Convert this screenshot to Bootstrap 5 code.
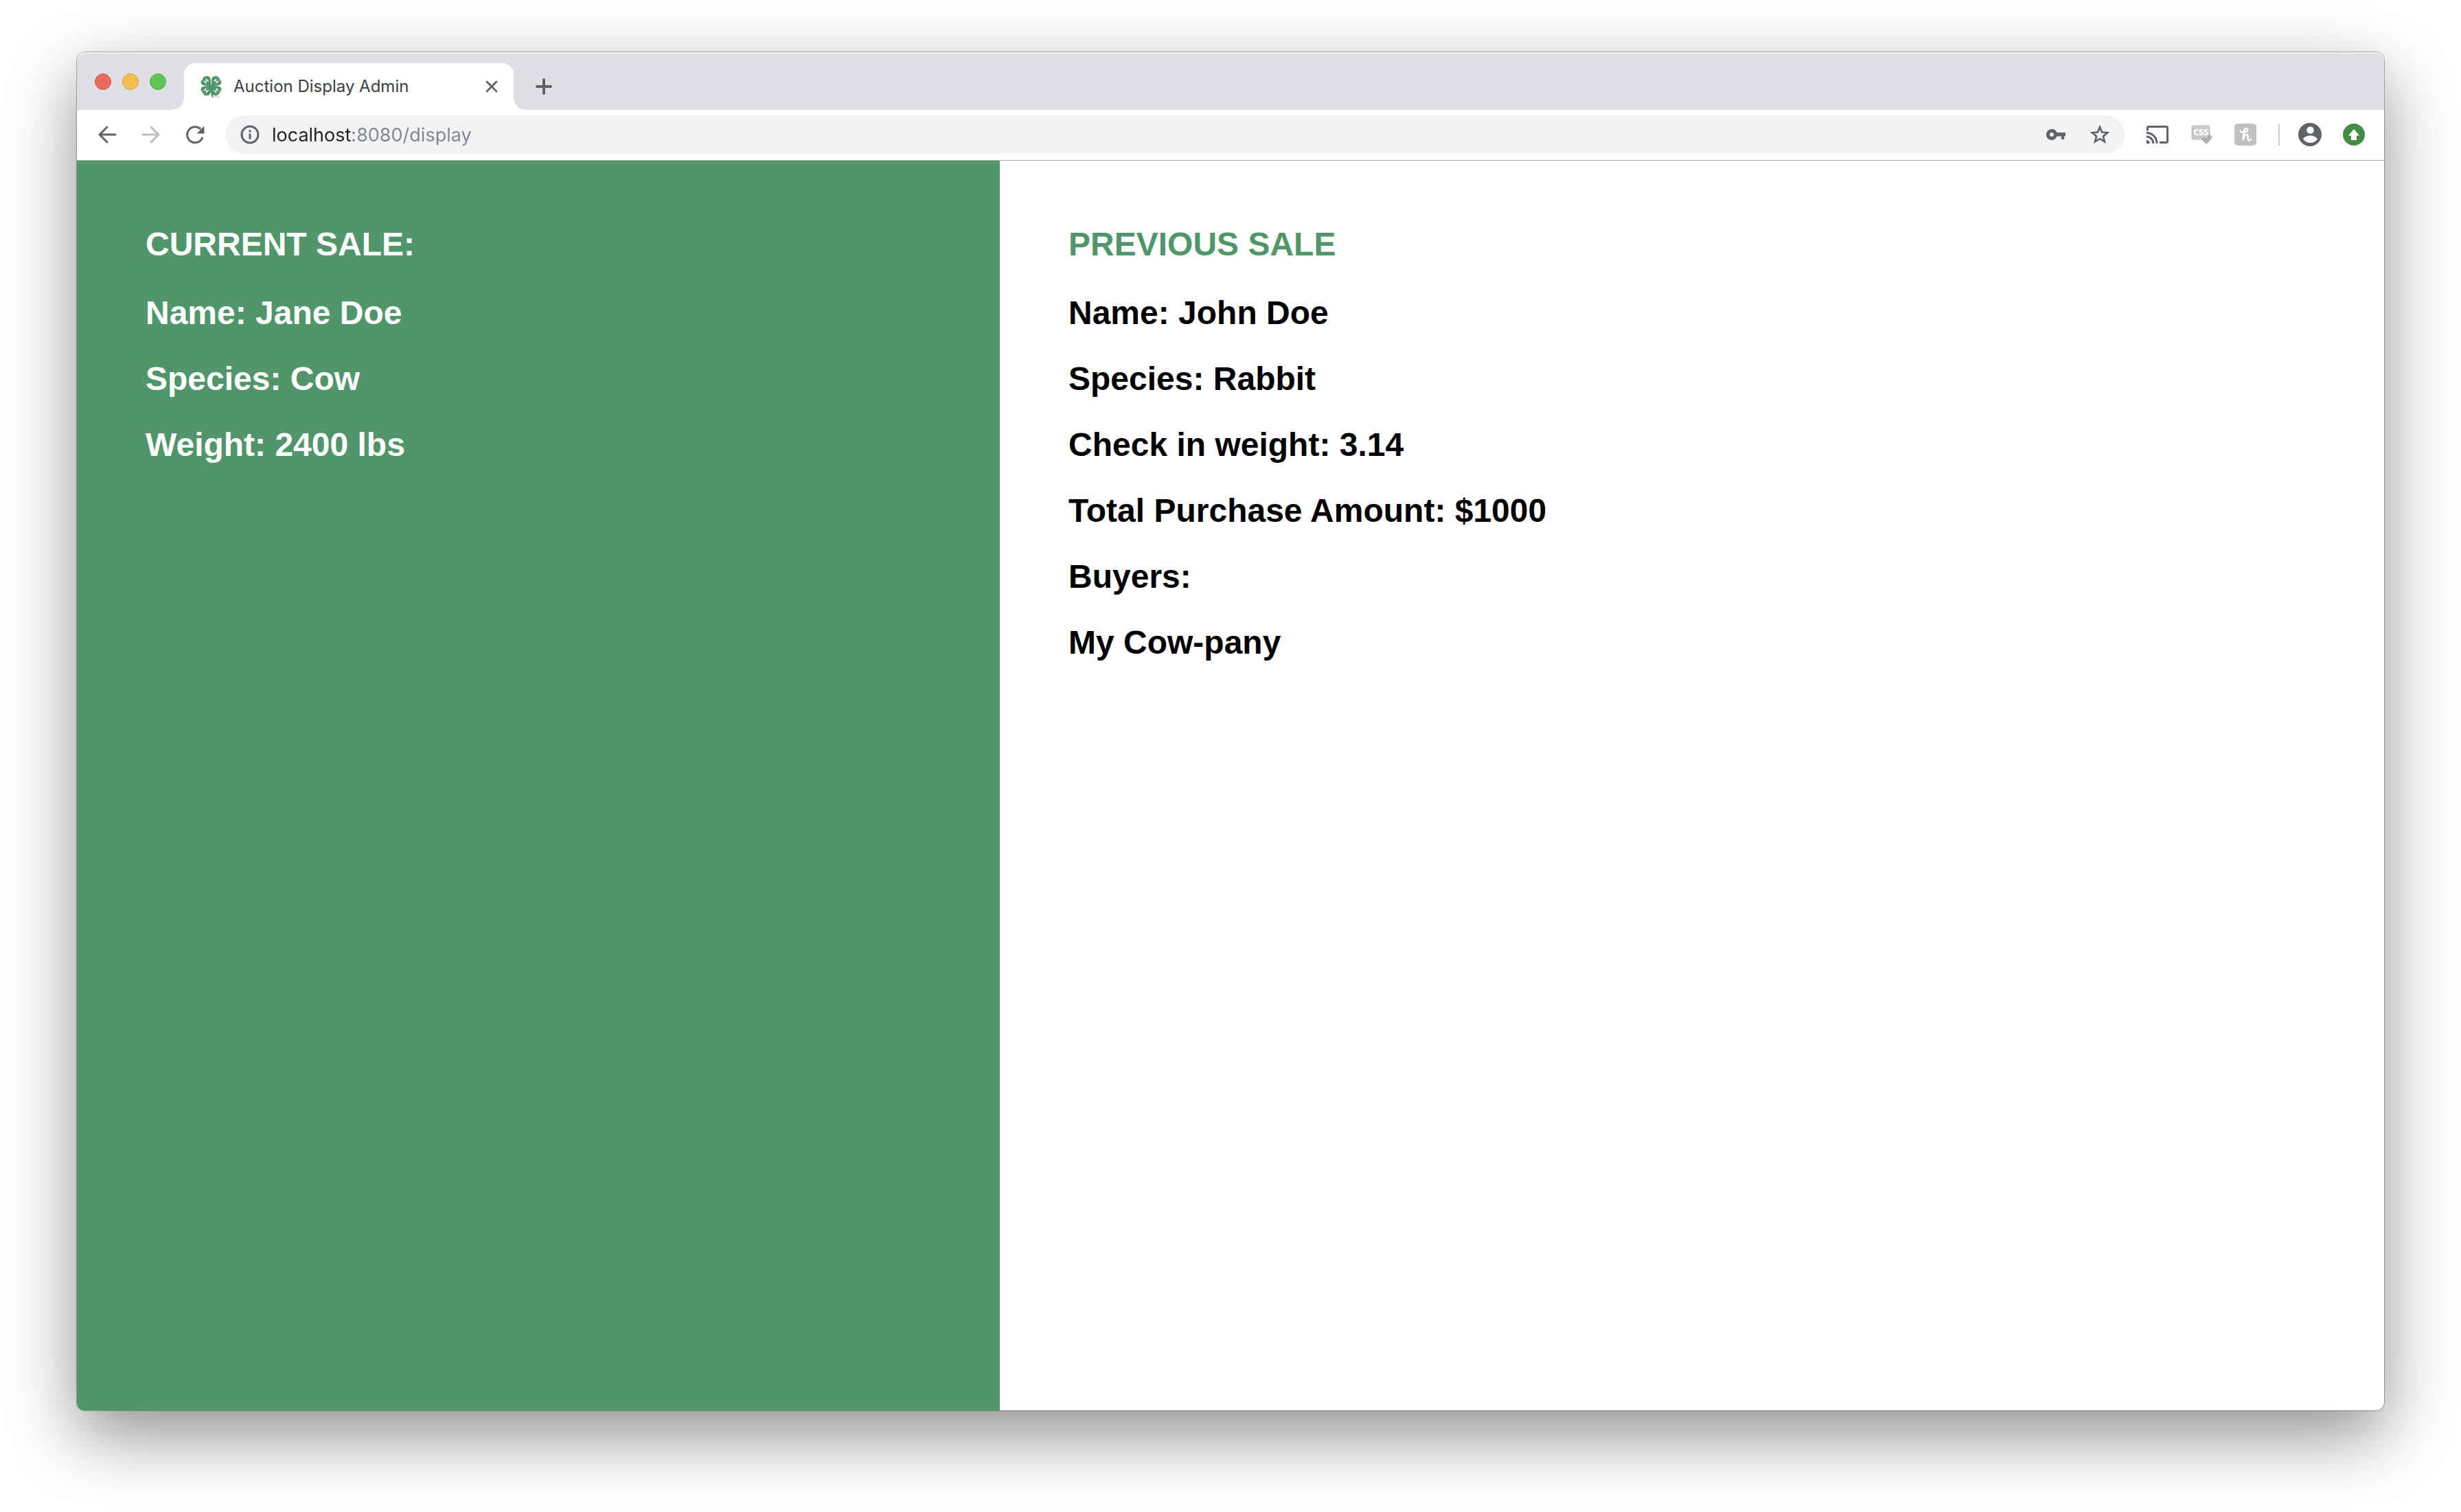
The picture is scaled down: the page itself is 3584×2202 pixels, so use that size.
<!DOCTYPE html>
<html lang="en">
<head>
<meta charset="utf-8">
<meta name="viewport" content="width=device-width, initial-scale=1">
<title>Auction Display Admin</title>
<link href="https://cdn.jsdelivr.net/npm/bootstrap@5.3.0/dist/css/bootstrap.min.css" rel="stylesheet">
<style>
  :root { --clover: #50966a; --ink: #5f6368; }
  body { background: #fff; padding: 76px 112px 148px; font-family: Inter, Roboto, sans-serif; }
  svg { display: block; flex: none; }
  .app-window { border-radius: 12px; background: #fff; box-shadow: 0 0 0 1px rgba(0,0,0,.28), 0 36px 100px rgba(0,0,0,.44); }
  .tab-strip { height: 84px; padding-left: 26px; background: #dfe0e6; border-radius: 12px 12px 0 0; box-shadow: inset 0 2px 0 rgba(255,255,255,.5); }
  .lights { gap: 16px; margin: 31px 26px 0 0; }
  .light { width: 24px; height: 24px; border-radius: 50%; border: 1px solid; padding: 0; }
  .light-close { background: #ec6a5e; border-color: #d5544a; }
  .light-min { background: #f5bf4f; border-color: #d9a03c; }
  .light-max { background: #61c554; border-color: #4eaa3f; }
  .page-tab { width: 480px; height: 68px; padding: 0 16px 0 24px; background: #fff; border-radius: 16px 16px 0 0; position: relative; color: #3c4043; font-size: 24px; line-height: 32px; }
  .page-tab::before, .page-tab::after { content: ""; position: absolute; bottom: 0; width: 16px; height: 16px; }
  .page-tab::before { left: -16px; background: radial-gradient(circle at 0 0, transparent 15px, #fff 16px); }
  .page-tab::after { right: -16px; background: radial-gradient(circle at 100% 0, transparent 15px, #fff 16px); }
  .tab-link { gap: 16px; color: inherit; text-decoration: none; }
  .tool-btn { width: 64px; height: 56px; padding: 0; border: 0; background: none; display: flex; align-items: center; justify-content: center; flex: none; color: var(--ink); }
  .tab-x { width: 32px; height: 32px; }
  .tab-plus { width: 56px; height: 68px; margin-left: 16px; }
  .toolbar-row { padding: 8px 12px 9px; border-bottom: 1px solid #b1b1b1; }
  .address { height: 56px; border-radius: 28px; background: #f1f3f4; margin: 0 16px 0 12px; padding: 0 4px 0 22px; }
  .address-input { border: 0; outline: 0; padding: 0; margin-left: 18px; height: 56px; min-width: 0; font-size: 27px; color: transparent;
    background: linear-gradient(90deg, #202124 118px, #80868b 118px); -webkit-background-clip: text; background-clip: text; }
  .divider { width: 2px; height: 32px; background: #cfcfcf; margin: 0 12px 0 16px; }
  .board { min-height: calc(100vh - 382px); font-family: "Liberation Sans", Arial, sans-serif; }
  .sale { padding: 94px 100px 60px; color: #000; }
  .sale-now { width: 40%; background: var(--clover); color: #fff; border-bottom-left-radius: 10px; }
  .sale-before { width: 60%; }
  .sale h1, .sale p { font-size: 48px; line-height: 56px; font-weight: 700; margin: 0 0 40px; }
  .sale h1 { margin-bottom: 44px; }
  .sale-before h1 { color: var(--clover); }
</style>
<script src="https://cdn.jsdelivr.net/npm/bootstrap@5.3.0/dist/js/bootstrap.bundle.min.js"></script>
</head>
<body>
<div class="app-window">
  <header>
    <div class="tab-strip d-flex align-items-end">
      <div class="lights d-flex align-self-start">
        <button class="light light-close" type="button" aria-label="Close window"></button>
        <button class="light light-min" type="button" aria-label="Minimize window"></button>
        <button class="light light-max" type="button" aria-label="Zoom window"></button>
      </div>
      <div class="page-tab d-flex align-items-center justify-content-between">
        <a class="tab-link d-flex align-items-center" href="#">
          <svg width="32" height="32" viewBox="0 0 32 32" aria-hidden="true">
            <defs><g id="leaf">
              <path fill="#50966a" d="M16 16C12 14.300 6 15.500 2.500 13.500C-.3 11.500 0 7.500 3 6C2.800 3 6.500 .2 10 .8C14 1.500 15.300 5 14.900 8.500C14.800 11 15.200 13 16 16Z"/>
              <path d="M4.600 7.600l4 4M7.800 4.600l4 4M6.800 9.500l3-3" stroke="#fff" stroke-width="1.200" fill="none"/>
            </g></defs>
            <use href="#leaf"/>
            <use href="#leaf" transform="matrix(-1 0 0 1 31 0)"/>
            <use href="#leaf" transform="matrix(1 0 0 -1 0 30)"/>
            <use href="#leaf" transform="matrix(-1 0 0 -1 31 30)"/>
            <path d="M15.500 14C15.500 21 16 27 18 31.500" stroke="#50966a" stroke-width="2.200" fill="none"/>
            <path d="M20 31h8" stroke="#9fc9ae" stroke-width="1"/>
          </svg>
          <span>Auction Display Admin</span>
        </a>
        <button class="tool-btn tab-x" type="button" aria-label="Close tab">
          <svg width="18" height="18" viewBox="0 0 18 18"><path d="M2 2l14 14M16 2L2 16" stroke="currentColor" stroke-width="2.800" stroke-linecap="round"/></svg>
        </button>
      </div>
      <button class="tool-btn tab-plus" type="button" aria-label="New tab">
        <svg width="24" height="24" viewBox="0 0 24 24"><path d="M12 2v20M2 12h20" stroke="currentColor" stroke-width="4" stroke-linecap="round"/></svg>
      </button>
    </div>
    <div class="toolbar-row d-flex align-items-center">
      <button class="tool-btn" type="button" aria-label="Back">
        <svg width="28" height="28" viewBox="0 0 28 28"><path d="M26 14H3M14 3L3 14L14 25" stroke="currentColor" stroke-width="3" fill="none" stroke-linecap="round"/></svg>
      </button>
      <button class="tool-btn" type="button" aria-label="Forward">
        <svg width="28" height="28" viewBox="0 0 28 28"><path d="M2 14H25M14 3L25 14L14 25" stroke="#babcbe" stroke-width="3" fill="none" stroke-linecap="round"/></svg>
      </button>
      <button class="tool-btn" type="button" aria-label="Reload">
        <svg width="28" height="28" viewBox="0 0 28 28"><path d="M25 18A11.500 11.500 0 1 1 22.200 6" stroke="currentColor" stroke-width="3" fill="none"/><path d="M27.500 1.500V12.500H16.500Z" fill="currentColor"/></svg>
      </button>
      <div class="address d-flex align-items-center flex-grow-1">
        <svg width="28" height="28" viewBox="0 0 28 28" aria-hidden="true"><circle cx="14" cy="14" r="12" fill="none" stroke="#5f6368" stroke-width="3"/><path d="M14 7.500v3M14 12.500v8" stroke="#5f6368" stroke-width="3"/></svg>
        <input class="address-input flex-grow-1" type="text" aria-label="Address" value="localhost:8080/display">
        <button class="tool-btn" type="button" aria-label="Saved passwords">
          <svg width="28" height="16" viewBox="0 0 28 16"><path fill="currentColor" fill-rule="evenodd" d="M8 0a8 8 0 0 1 7.500 5H28V10.500H26V15H22V10.500H15.500A8 8 0 1 1 8 0ZM8 5a3 3 0 1 0 0 6a3 3 0 0 0 0-6Z"/></svg>
        </button>
        <button class="tool-btn" type="button" aria-label="Bookmark">
          <svg width="30" height="30" viewBox="0 0 30 30"><path d="M15 4L18 11.600L26.200 12.200L19.900 17.400L22 25.400L15 21L8 25.400L10.100 17.400L3.800 12.200L12 11.600Z" stroke="currentColor" stroke-width="2.600" fill="none"/></svg>
        </button>
      </div>
      <button class="tool-btn" type="button" aria-label="Cast">
        <svg width="32" height="28" viewBox="0 0 32 28"><g fill="none" stroke="currentColor" stroke-width="3"><path d="M1.500 8.500V4Q1.500 2.500 3 2.500H29Q30.500 2.500 30.500 4V24Q30.500 25.500 29 25.500H19"/><path d="M0 11.500A15 15 0 0 1 15 26.900M0 17A9.800 9.800 0 0 1 9.800 26.900"/></g><path d="M0 22A5 5 0 0 1 5 27H0Z" fill="currentColor"/></svg>
      </button>
      <button class="tool-btn" type="button" aria-label="CSS validator">
        <svg width="32" height="30" viewBox="0 0 32 30"><rect x="2" y="2" width="26" height="20" rx="2" fill="#c9c9c9" stroke="#bdbdbd"/><text x="15" y="16" text-anchor="middle" font-family="Open Sans, sans-serif" font-weight="800" font-size="12" fill="#fff">CSS</text><path d="M18 20l5 5l7-8" stroke="#949494" stroke-width="5" fill="none"/><path d="M18 20l5 5l7-8" stroke="#b3b3b3" stroke-width="3" fill="none"/></svg>
      </button>
      <button class="tool-btn" type="button" aria-label="Honey">
        <svg width="32" height="32" viewBox="0 0 32 32"><rect width="32" height="32" rx="5" fill="#c1c1c1"/><path d="M8.500 11C10 14 19 13 19 9C19 5.800 14.500 6.500 13.900 11L12.300 24.500C13 20 15.500 16 18 16C21.500 16 17.800 24.500 21.500 24.500C22.800 24.500 23.600 24 24 23" stroke="#fff" stroke-width="2.500" fill="none" stroke-linecap="round"/></svg>
      </button>
      <div class="divider"></div>
      <button class="tool-btn" type="button" aria-label="Profile">
        <svg width="34" height="34" viewBox="0 0 34 34"><circle cx="17" cy="17" r="17" fill="currentColor"/><circle cx="17.500" cy="10.500" r="5.300" fill="#fff"/><path d="M7 23.500C9 20 13 18.500 17.500 18.500S26 20 28 23.500C25.500 27 22 29 17.500 29S9.500 27 7 23.500Z" fill="#fff"/></svg>
      </button>
      <button class="tool-btn" type="button" aria-label="Update available">
        <svg width="32" height="32" viewBox="0 0 32 32"><circle cx="16" cy="16" r="16" fill="#458b45"/><path d="M16 8L24 17.500H20V24H12V17.500H8Z" fill="#fff"/></svg>
      </button>
    </div>
  </header>
  <main class="board d-flex">
    <section class="sale sale-now">
      <h1>CURRENT SALE:</h1>
      <p>Name: Jane Doe</p>
      <p>Species: Cow</p>
      <p>Weight: 2400 lbs</p>
    </section>
    <section class="sale sale-before">
      <h1>PREVIOUS SALE</h1>
      <p>Name: John Doe</p>
      <p>Species: Rabbit</p>
      <p>Check in weight: 3.14</p>
      <p>Total Purchase Amount: $1000</p>
      <p>Buyers:</p>
      <p>My Cow-pany</p>
    </section>
  </main>
</div>
</body>
</html>
